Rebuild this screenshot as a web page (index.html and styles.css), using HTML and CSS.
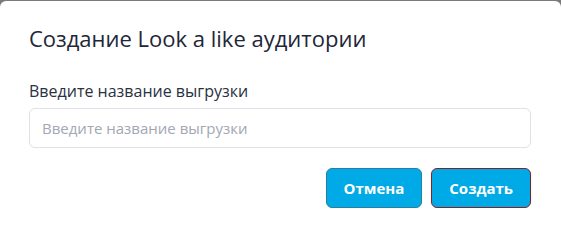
FILE: index.html
```html
<!DOCTYPE html>
<html lang="ru">
<head>
    <meta charset="UTF-8">
    <title>Создание Look a like аудитории</title>
    <link rel="stylesheet" href="styles.css">
</head>
<body>
    <div class="modal">
        <h2 class="modal-title">Создание Look a like аудитории</h2>
        <div class="modal-body">
            <label for="upload-name" class="field-label">Введите название выгрузки</label>
            <input type="text" id="upload-name" class="field-input" placeholder="Введите название выгрузки">
        </div>
        <div class="modal-footer">
            <button type="button" class="btn btn-cancel">Отмена</button>
            <button type="submit" class="btn btn-create">Создать</button>
        </div>
    </div>
</body>
</html>
```

FILE: styles.css
```css
/* Base */
body {
    margin: 0;
    background: #7a7a7a;
    font-family: 'Open Sans', sans-serif;
    height: 100vh;
    overflow: hidden;
}

.modal {
    margin-top: 1px;
    height: calc(100vh - 1px);
    background: #fff;
    border-radius: 6px 6px 0 0;
    padding: 0 30px 0 29px;
    box-sizing: border-box;
}

.modal-title {
    margin: 0;
    padding-top: 22px;
    font-size: 22px;
    font-weight: 400;
    line-height: 30px;
    color: #1e2637;
}

.modal-body {
    padding-top: 27px;
}

.field-label {
    display: block;
    font-size: 16px;
    line-height: 22px;
    color: #2a3142;
    margin-bottom: 6px;
}

.field-input {
    display: block;
    width: 100%;
    box-sizing: border-box;
    height: 40px;
    padding: 0 12px;
    border: 1px solid #dfe1e6;
    border-radius: 6px;
    font-family: 'Open Sans', sans-serif;
    font-size: 15px;
    color: #2a3142;
}

.field-input::placeholder {
    color: #a2a7b3;
}

.modal-footer {
    display: flex;
    justify-content: flex-end;
    gap: 9px;
    padding-top: 20px;
}

.btn {
    height: 40px;
    padding: 0 17px;
    background: #00aae6;
    color: #fff;
    font-family: 'Open Sans', sans-serif;
    font-size: 15px;
    font-weight: 700;
    border-radius: 6px;
    cursor: pointer;
}

.btn-cancel {
    border: 1px solid #2a7f9e;
}

.btn-create {
    border: 1px solid #8a1f24;
}
```
